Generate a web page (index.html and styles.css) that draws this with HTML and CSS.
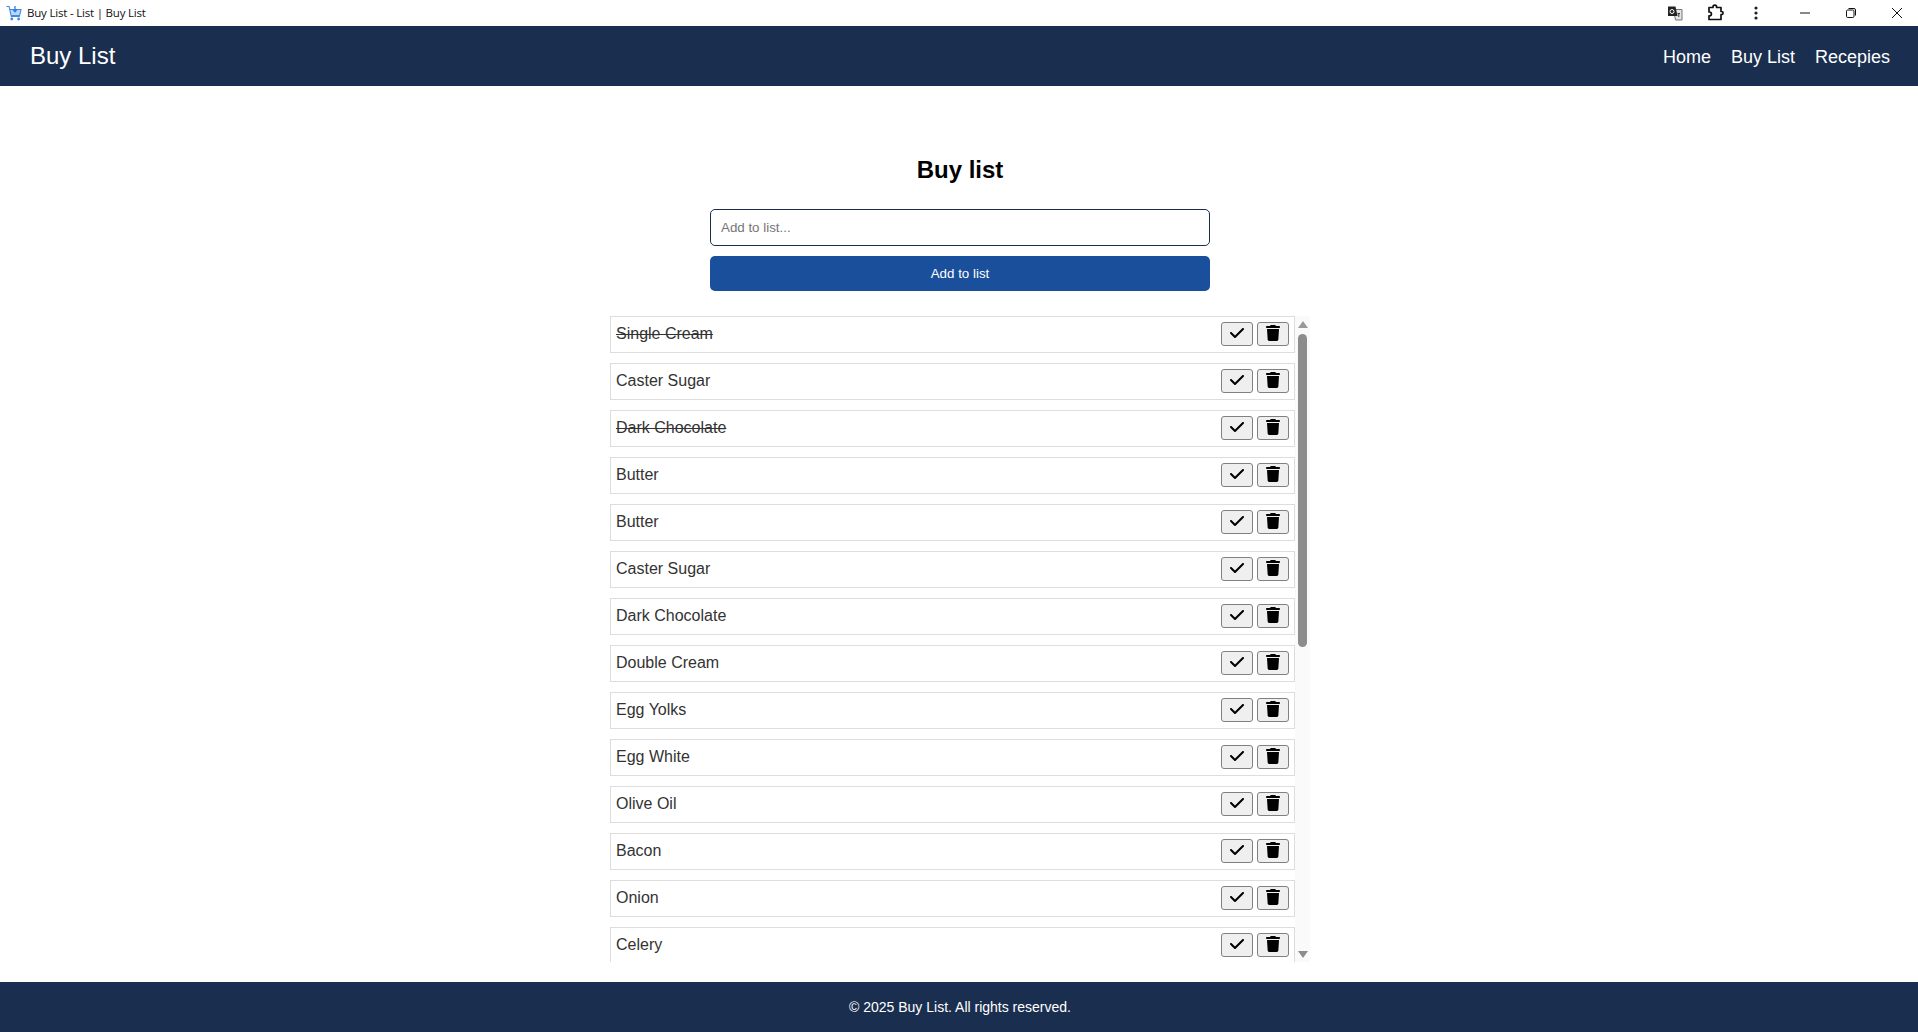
FILE: index.html
```html
<!DOCTYPE html>
<html lang="en">
<head>
<meta charset="utf-8">
<title>Buy List - List | Buy List</title>
<link rel="stylesheet" href="styles.css">
</head>
<body>
<svg class="defs" width="0" height="0" aria-hidden="true">
  <symbol id="i-check" viewBox="0 0 448 512"><path d="M438.6 105.4c12.5 12.5 12.5 32.8 0 45.3l-256 256c-12.5 12.5-32.8 12.5-45.3 0l-128-128c-12.5-12.5-12.5-32.8 0-45.3s32.8-12.5 45.3 0L160 338.7 393.4 105.4c12.5-12.5 32.8-12.5 45.3 0z"/></symbol>
  <symbol id="i-trash" viewBox="0 0 448 512"><path d="M135.2 17.7L128 32H32C14.3 32 0 46.3 0 64S14.3 96 32 96H416c17.7 0 32-14.3 32-32s-14.3-32-32-32H320l-7.2-14.3C307.4 6.8 296.3 0 284.2 0H163.8c-12.1 0-23.2 6.8-28.6 17.7zM416 128H32L53.2 467c1.6 25.3 22.6 45 47.9 45H346.9c25.3 0 46.3-19.7 47.9-45L416 128z"/></symbol>
</svg>

<div class="titlebar">
  <svg class="favicon" width="16" height="16" viewBox="0 0 16 16"><path d="M3.5 4.5h11.5l-1.4 6H5z" fill="#bcd7f7"/><path d="M.5 1.5h2.6l2.2 10h8.5M4 4.5h11l-1.4 6H5" fill="none" stroke="#3f8ae8" stroke-width="1.1"/><path d="M9 1v5.5M7 4.6l2 2.2 2-2.2" fill="none" stroke="#2f7be0" stroke-width="1.3"/><circle cx="5.8" cy="14" r="1.4" fill="#3f8ae8"/><circle cx="12.6" cy="14" r="1.4" fill="#3f8ae8"/></svg>
  <span class="wintitle">Buy List - List | Buy List</span>
  <div class="winactions">
    <span class="winicon"><svg width="16" height="16" viewBox="0 0 16 16"><path d="M6.5 4.5h8.5v10.500H8.500z" fill="#e4e4e4" stroke="#777" stroke-width="1"/><path d="M1 1.500h7.500l2 9.500H1z" fill="#222"/><circle cx="5" cy="6.500" r="2" fill="none" stroke="#fff" stroke-width="1"/><path d="M10.500 8.500h2.500M11.800 8v4" stroke="#333" stroke-width="1"/></svg></span>
    <span class="winicon winicon-next"><svg width="18" height="18" viewBox="0 0 18 18"><path d="M2 3.500h4V3a1.800 1.800 0 0 1 3.600 0v.5H14v4h.5a1.600 1.600 0 0 1 0 3.200H14v4.800H2v-3.700h.5a1.900 1.900 0 0 0 0-3.800H2z" fill="#fff" stroke="#111" stroke-width="1.700" stroke-linejoin="round"/></svg></span>
    <span class="winicon"><svg width="4" height="14" viewBox="0 0 4 14"><circle cx="2" cy="2" r="1.600" fill="#222"/><circle cx="2" cy="7" r="1.600" fill="#222"/><circle cx="2" cy="12" r="1.600" fill="#222"/></svg></span>
  </div>
  <div class="winbuttons">
    <span class="winbtn"><svg width="10" height="10" viewBox="0 0 10 10"><path d="M0 5h10" stroke="#111" stroke-width="1"/></svg></span>
    <span class="winbtn"><svg width="10" height="10" viewBox="0 0 10 10"><rect x=".5" y="2" width="7.500" height="7.500" rx="1.200" fill="none" stroke="#111"/><path d="M2.500 .5h5.500a1.500 1.500 0 0 1 1.500 1.500v5.500" fill="none" stroke="#111"/></svg></span>
    <span class="winbtn winbtn-last"><svg width="10" height="10" viewBox="0 0 10 10"><path d="M0 0l10 10M10 0L0 10" stroke="#111" stroke-width="1"/></svg></span>
  </div>
</div>

<nav class="navbar">
  <a class="brand" href="#">Buy List</a>
  <div class="navlinks">
    <a href="#">Home</a>
    <a href="#">Buy List</a>
    <a href="#">Recepies</a>
  </div>
</nav>

<main class="main">
  <h1 class="heading">Buy list</h1>
  <form class="addform">
    <input class="addinput" type="text" placeholder="Add to list...">
    <button class="addbtn" type="button">Add to list</button>
  </form>
  <div class="listwrap">
    <ul class="list">
      <li class="row done"><span class="name">Single Cream</span><button class="act" type="button"><svg class="ic"><use href="#i-check"/></svg></button><button class="act" type="button"><svg class="ic"><use href="#i-trash"/></svg></button></li>
      <li class="row"><span class="name">Caster Sugar</span><button class="act" type="button"><svg class="ic"><use href="#i-check"/></svg></button><button class="act" type="button"><svg class="ic"><use href="#i-trash"/></svg></button></li>
      <li class="row done"><span class="name">Dark Chocolate</span><button class="act" type="button"><svg class="ic"><use href="#i-check"/></svg></button><button class="act" type="button"><svg class="ic"><use href="#i-trash"/></svg></button></li>
      <li class="row"><span class="name">Butter</span><button class="act" type="button"><svg class="ic"><use href="#i-check"/></svg></button><button class="act" type="button"><svg class="ic"><use href="#i-trash"/></svg></button></li>
      <li class="row"><span class="name">Butter</span><button class="act" type="button"><svg class="ic"><use href="#i-check"/></svg></button><button class="act" type="button"><svg class="ic"><use href="#i-trash"/></svg></button></li>
      <li class="row"><span class="name">Caster Sugar</span><button class="act" type="button"><svg class="ic"><use href="#i-check"/></svg></button><button class="act" type="button"><svg class="ic"><use href="#i-trash"/></svg></button></li>
      <li class="row"><span class="name">Dark Chocolate</span><button class="act" type="button"><svg class="ic"><use href="#i-check"/></svg></button><button class="act" type="button"><svg class="ic"><use href="#i-trash"/></svg></button></li>
      <li class="row"><span class="name">Double Cream</span><button class="act" type="button"><svg class="ic"><use href="#i-check"/></svg></button><button class="act" type="button"><svg class="ic"><use href="#i-trash"/></svg></button></li>
      <li class="row"><span class="name">Egg Yolks</span><button class="act" type="button"><svg class="ic"><use href="#i-check"/></svg></button><button class="act" type="button"><svg class="ic"><use href="#i-trash"/></svg></button></li>
      <li class="row"><span class="name">Egg White</span><button class="act" type="button"><svg class="ic"><use href="#i-check"/></svg></button><button class="act" type="button"><svg class="ic"><use href="#i-trash"/></svg></button></li>
      <li class="row"><span class="name">Olive Oil</span><button class="act" type="button"><svg class="ic"><use href="#i-check"/></svg></button><button class="act" type="button"><svg class="ic"><use href="#i-trash"/></svg></button></li>
      <li class="row"><span class="name">Bacon</span><button class="act" type="button"><svg class="ic"><use href="#i-check"/></svg></button><button class="act" type="button"><svg class="ic"><use href="#i-trash"/></svg></button></li>
      <li class="row"><span class="name">Onion</span><button class="act" type="button"><svg class="ic"><use href="#i-check"/></svg></button><button class="act" type="button"><svg class="ic"><use href="#i-trash"/></svg></button></li>
      <li class="row"><span class="name">Celery</span><button class="act" type="button"><svg class="ic"><use href="#i-check"/></svg></button><button class="act" type="button"><svg class="ic"><use href="#i-trash"/></svg></button></li>
    </ul>
    <div class="scrollbar">
      <span class="arrow-up"></span>
      <span class="thumb"></span>
      <span class="arrow-down"></span>
    </div>
  </div>
</main>

<footer class="footer">© 2025 Buy List. All rights reserved.</footer>
</body>
</html>
```
FILE: styles.css
```css
* { box-sizing: border-box; }
html, body { height: 100%; }
body {
  margin: 0;
  display: flex;
  flex-direction: column;
  height: 100vh;
  overflow: hidden;
  background: #fff;
  color: #000;
  font-family: "Liberation Sans", Arial, sans-serif;
}
.defs { position: absolute; }

.titlebar {
  flex: 0 0 26px;
  display: flex;
  align-items: center;
  padding-left: 6px;
  background: #fff;
}
.favicon { flex: none; }
.wintitle {
  margin-left: 5px;
  padding-bottom: 2px;
  font-family: "Open Sans", sans-serif;
  font-size: 11.5px;
  letter-spacing: -0.2px;
  color: #111;
}
.winactions { margin-left: auto; display: flex; align-items: center; }
.winicon { width: 40px; height: 26px; display: flex; align-items: center; justify-content: center; }
.winicon-next { margin-left: 1px; }
.winbuttons { margin-left: 6px; display: flex; }
.winbtn { width: 46px; height: 26px; display: flex; align-items: center; justify-content: center; }
.winbtn-last { width: 44px; justify-content: flex-start; padding-left: 18px; }

.navbar {
  flex: 0 0 60px;
  display: flex;
  align-items: center;
  justify-content: space-between;
  padding: 0 28px 0 30px;
  background: #1a2f50;
}
.navbar a { color: #fff; text-decoration: none; }
.brand { font-size: 24px; }
.navlinks { display: flex; gap: 20px; padding-top: 2px; font-size: 18px; }

.main {
  flex: 1;
  min-height: 0;
  display: flex;
  flex-direction: column;
  align-items: center;
  padding: 70px 0 20px 2px;
}
.heading {
  margin: 0 0 26px;
  font-size: 24px;
  line-height: 27px;
  font-weight: bold;
}
.addform { width: 500px; display: flex; flex-direction: column; gap: 10px; }
.addinput {
  height: 37px;
  padding: 0 10px;
  border: 1px solid #1a2f50;
  border-radius: 5px;
  font-family: "Liberation Sans", Arial, sans-serif;
  font-size: 13.33px;
  outline: none;
}
.addinput::placeholder { color: #757575; }
.addbtn {
  height: 35px;
  border: 0;
  border-radius: 5px;
  background: #1a4f9c;
  color: #fff;
  font-family: "Liberation Sans", Arial, sans-serif;
  font-size: 13.33px;
}

.listwrap {
  flex: 1;
  min-height: 0;
  width: 700px;
  margin-top: 25px;
  display: flex;
}
.list {
  flex: 1;
  min-width: 0;
  margin: 0;
  padding: 0;
  list-style: none;
  overflow: hidden;
}
.row {
  height: 37px;
  margin-bottom: 10px;
  padding: 5px;
  border: 1px solid #ddd;
  display: flex;
  align-items: flex-start;
  gap: 4px;
}
.name { flex: 1; padding-top: 3px; font-size: 16px; line-height: 18px; color: #333; }
.done .name { text-decoration: line-through; }
.act {
  flex: none;
  width: 32px;
  height: 24px;
  padding: 0 0 2px;
  display: flex;
  align-items: center;
  justify-content: center;
  border: 1px solid #808080;
  border-radius: 3px;
  background: #efefef;
}
.ic { width: 14px; height: 16px; fill: #000; }

.scrollbar {
  flex: 0 0 15px;
  display: flex;
  flex-direction: column;
  align-items: center;
  background: #fafafa;
  padding: 5px 0 0;
}
.arrow-up, .arrow-down {
  flex: none;
  width: 0;
  height: 0;
  border-left: 5px solid transparent;
  border-right: 5px solid transparent;
}
.arrow-up { border-bottom: 7px solid #999; }
.arrow-down { border-top: 7px solid #8c8c8c; margin-top: auto; margin-bottom: 4px; }
.thumb {
  flex: none;
  width: 9px;
  height: 313px;
  margin-top: 6px;
  border-radius: 5px;
  background: #8c8c8c;
}

.footer {
  flex: 0 0 50px;
  display: flex;
  align-items: center;
  justify-content: center;
  padding-left: 2px;
  background: #1a2f50;
  color: #fff;
  font-size: 14px;
}
```
